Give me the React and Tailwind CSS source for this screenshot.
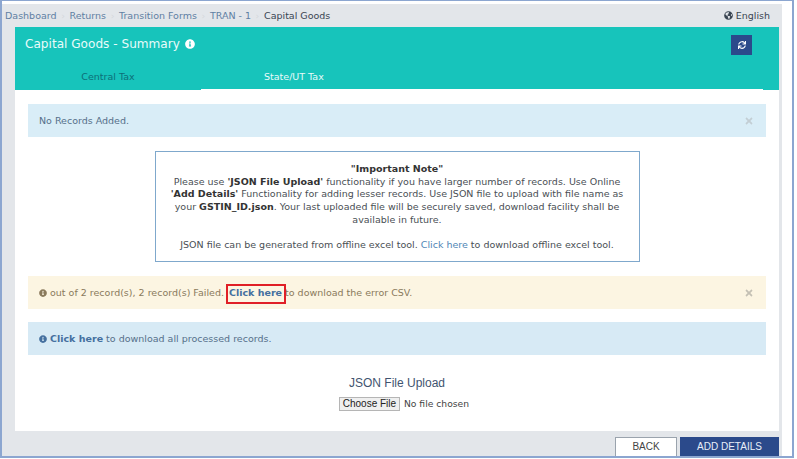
import React from "react";
import { FaInfoCircle, FaGlobeAmericas, FaSync, FaTimes } from "react-icons/fa";

const crumbs = ["Dashboard", "Returns", "Transition Forms", "TRAN - 1"];

function Alert({ bg, text, closeColor, children }) {
  return (
    <div className={`flex h-[33px] items-center justify-between pl-[11px] pr-[12px] ${bg} ${text}`}>
      <div className="flex items-center whitespace-pre">{children}</div>
      {closeColor && <FaTimes className={`h-[10px] w-[10px] ${closeColor}`} />}
    </div>
  );
}

export default function App() {
  return (
    <div className="h-[459px] w-[797px] overflow-hidden bg-white font-['DejaVu_Sans',sans-serif] text-[9.5px] leading-none">
      <div className="h-[458px] w-[794px] border-b-2 border-l-2 border-r-2 border-t border-[#8ca6d0] pt-[3px]">
        <div className="flex h-full w-[780px] flex-col bg-[#e3e6ea]">
          {/* breadcrumb */}
          <div className="flex h-[23px] shrink-0 items-center justify-between pl-[3px] pr-[12px] text-[#5f7fa3]">
            <div className="flex items-center">
              {crumbs.map((c) => (
                <span key={c} className="flex items-center">
                  {c}
                  <span className="w-[13px] text-center text-[#d5d8dc]">›</span>
                </span>
              ))}
              <span className="text-[#3a4552]">Capital Goods</span>
            </div>
            <div className="flex items-center gap-[3px] text-[#3a4552]">
              <FaGlobeAmericas className="h-[9px] w-[9px]" />
              English
            </div>
          </div>

          {/* card */}
          <div className="ml-[13px] mr-[3px] flex h-[404px] shrink-0 flex-col bg-white">
            <div className="h-[63px] shrink-0 bg-[#17c4bb]">
              <div className="flex h-[45px] items-start justify-between pl-[10px] pr-[27px] pt-[8px]">
                <div className="flex items-center gap-[5px] pt-[3px] text-[12.1px] text-[#e8fbfa]">
                  Capital Goods - Summary
                  <FaInfoCircle className="h-[10px] w-[10px] text-white" />
                </div>
                <div className="flex h-[20px] w-[21px] items-center justify-center bg-[#2b4a8b] text-white">
                  <FaSync className="h-[8px] w-[8px]" />
                </div>
              </div>
              <div className="flex h-[18px] items-start">
                <div className="flex h-[18px] w-[186px] justify-center text-[#0d6f78]">Central Tax</div>
                <div className="flex h-[18px] w-[562px] border-b border-white pl-[63px] text-[#e8fbfa]">State/UT Tax</div>
              </div>
            </div>

            <div className="flex flex-col px-[13px] pt-[14px]">
              <Alert bg="bg-[#d9edf7]" text="text-[#56708a]" closeColor="text-[#c3ced4]">
                No Records Added.
              </Alert>

              <div className="mx-auto mt-[14px] flex h-[111px] w-[485px] flex-col items-center border border-[#7fa8cc] px-[15px] pt-[11px] text-center leading-[12.7px] text-[#4a4f55]">
                <b className="text-[#333]">"Important Note"</b>
                <p>
                  Please use <b className="text-[#333]">'JSON File Upload'</b> functionality if you have larger number of records. Use Online{" "}
                  <b className="text-[#333]">'Add Details'</b> Functionality for adding lesser records. Use JSON file to upload with file name as
                  your <b className="text-[#333]">GSTIN_ID.json</b>. Your last uploaded file will be securely saved, download facility shall be
                  available in future.
                </p>
                <p className="mt-[12.7px] whitespace-nowrap">
                  JSON file can be generated from offline excel tool. <span className="text-[#4f86b5]">Click here</span> to download offline excel tool.
                </p>
              </div>

              <div className="relative mt-[14px]">
                <Alert bg="bg-[#fcf5e2]" text="text-[#8a7a5c]" closeColor="text-[#c4c0b4]">
                  <FaInfoCircle className="mr-[3px] h-[8px] w-[8px]" />
                  {"out of 2 record(s), 2 record(s) Failed. "}
                  <b className="ml-[2px] text-[#45709f]">Click here</b>
                  {" to download the error CSV."}
                </Alert>
                <div className="absolute left-[198px] top-[8px] h-[20px] w-[60px] border-2 border-[#e01f26]" />
              </div>

              <div className="mt-[13px]">
                <Alert bg="bg-[#d7eaf5]" text="text-[#56708a]">
                  <FaInfoCircle className="mr-[3px] h-[8px] w-[8px] text-[#45709f]" />
                  <b className="text-[#45709f]">Click here</b>
                  {" to download all processed records."}
                </Alert>
              </div>

              <div className="mt-[22px] flex flex-col items-center font-['Liberation_Sans',sans-serif]">
                <div className="text-[12px] text-[#3f5470]">JSON File Upload</div>
                <div className="ml-[14px] mt-[8px] flex items-center text-[10px] text-[#444]">
                  <span className="flex h-[14px] w-[61px] items-center justify-center whitespace-nowrap border border-[#b5b5b5] bg-[#efefef] text-[#222]">Choose File</span>
                  <span className="ml-[4px] font-['DejaVu_Sans',sans-serif] text-[9.2px]">No file chosen</span>
                </div>
              </div>
            </div>
          </div>

          {/* footer buttons */}
          <div className="flex flex-1 items-end justify-end gap-[3px] pr-[3px] font-['Liberation_Sans',sans-serif] text-[10px]">
            <div className="flex h-[19px] w-[62px] items-center justify-center border border-b-0 border-[#9aa3ad] bg-white text-[#444]">BACK</div>
            <div className="flex h-[19px] w-[99px] items-center justify-center bg-[#2b4a8b] text-[#e8eef8]">ADD DETAILS</div>
          </div>
        </div>
      </div>
    </div>
  );
}
